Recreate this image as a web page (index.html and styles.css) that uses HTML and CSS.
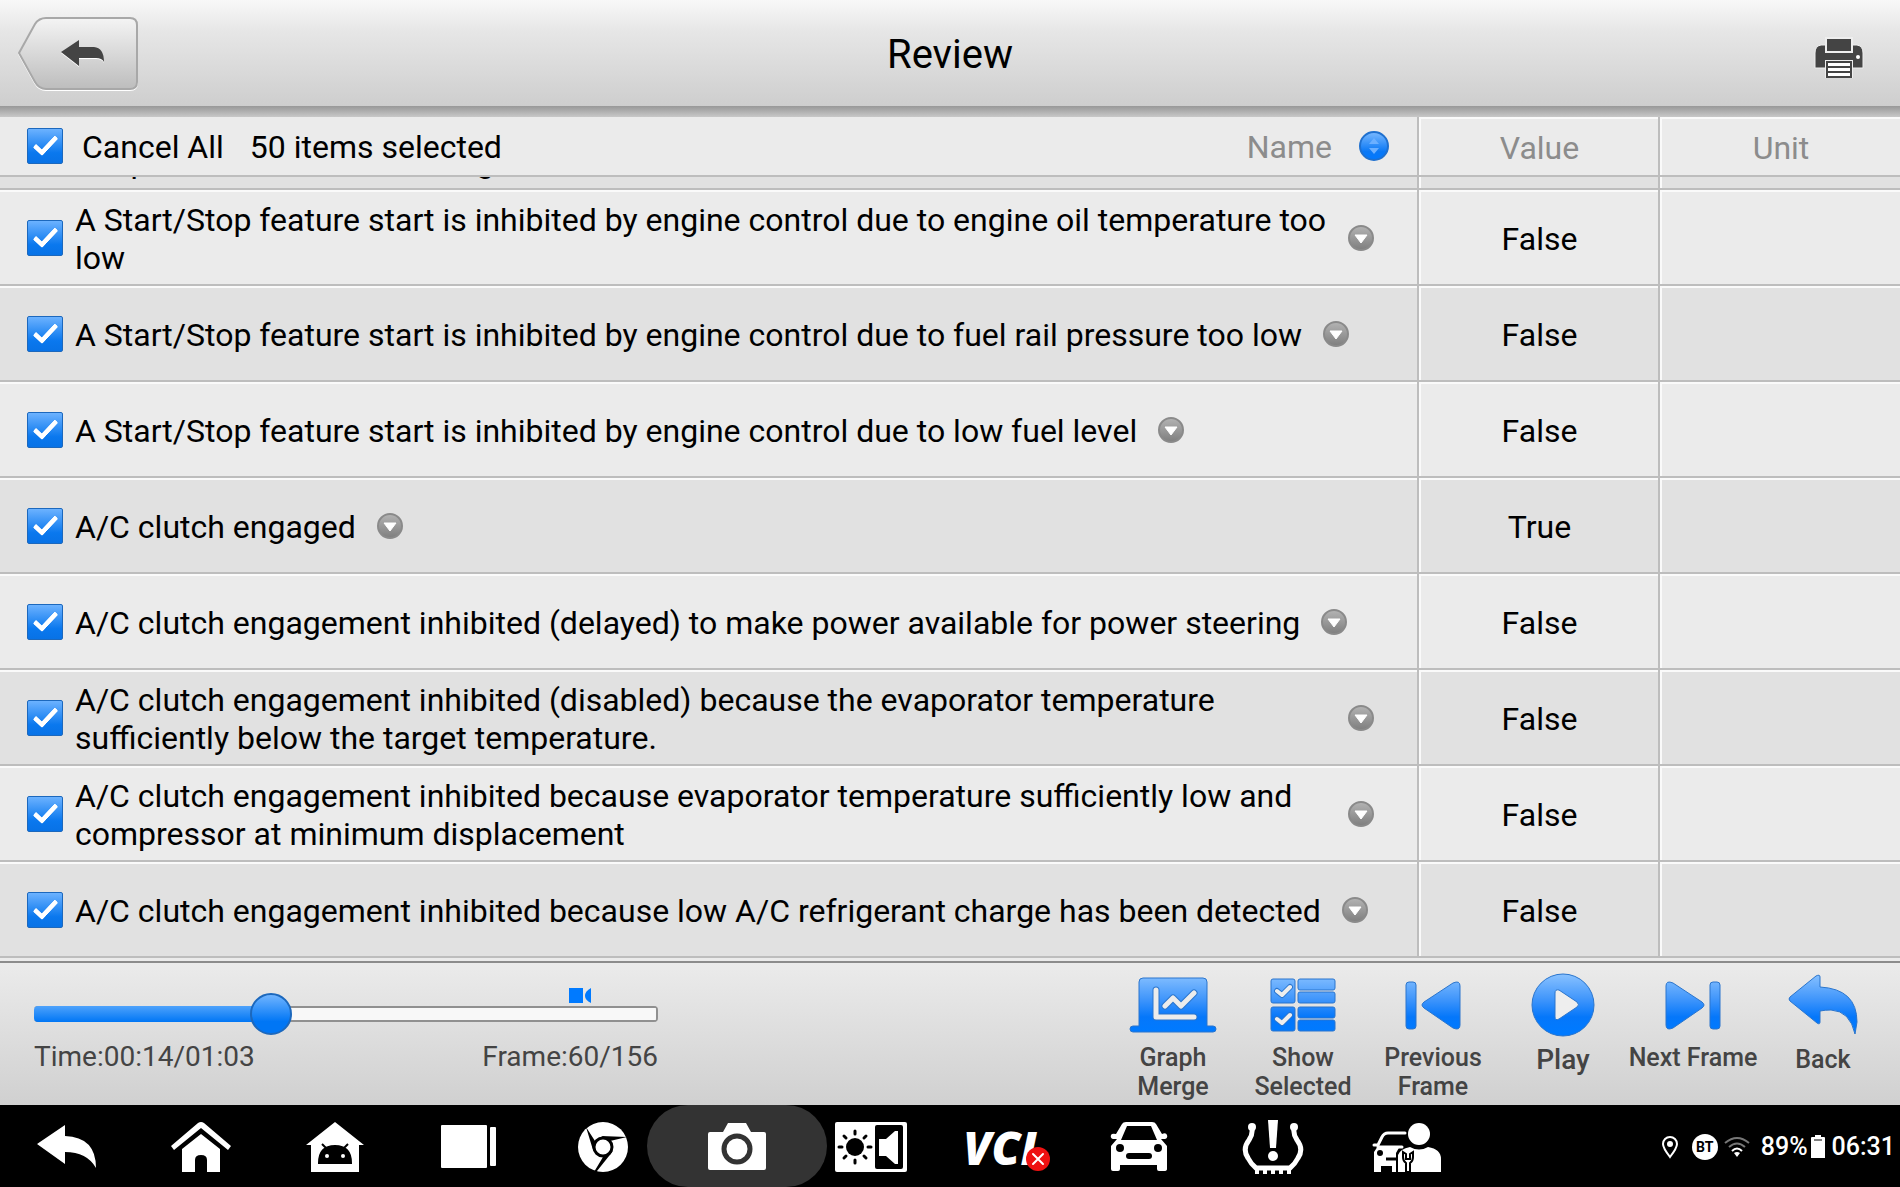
FILE: index.html
```html
<!DOCTYPE html>
<html lang="en">
<head>
    <meta charset="UTF-8">
    <meta name="viewport" content="width=device-width, initial-scale=1.0">
    <title>Review</title>
    <link rel="stylesheet" href="styles.css">
</head>
<body>
    <!-- shared gradients and symbols -->
    <svg class="defs" width="0" height="0" aria-hidden="true">
        <defs>
            <linearGradient id="blue" x1="0" y1="0" x2="0" y2="1">
                <stop offset="0" stop-color="#7ab9ff"/>
                <stop offset="0.7" stop-color="#0a78f5"/>
                <stop offset="1" stop-color="#0078ff"/>
            </linearGradient>
            <linearGradient id="blueLong" gradientUnits="userSpaceOnUse" x1="0" y1="2" x2="0" y2="58">
                <stop offset="0" stop-color="#86c0ff"/>
                <stop offset="0.45" stop-color="#3d94fb"/>
                <stop offset="0.75" stop-color="#0577fa"/>
                <stop offset="1" stop-color="#007aff"/>
            </linearGradient>
            <linearGradient id="grey" x1="0" y1="0" x2="0" y2="1">
                <stop offset="0" stop-color="#b4b4b4"/>
                <stop offset="1" stop-color="#7e7e7e"/>
            </linearGradient>
            <linearGradient id="silver" x1="0" y1="0" x2="0" y2="1">
                <stop offset="0" stop-color="#f4f4f4"/>
                <stop offset="1" stop-color="#bdbdbd"/>
            </linearGradient>
            <symbol id="more" viewBox="0 0 28 28">
                <circle cx="14" cy="14" r="12" fill="url(#grey)" stroke="#8a8a8a" stroke-width="2"/>
                <path d="M8 11h12l-6 8z" fill="#fff" stroke="#fff" stroke-linejoin="round"/>
            </symbol>
        </defs>
    </svg>

    <header>
        <button class="back-button" aria-label="Back">
            <svg width="120" height="76" viewBox="0 0 120 76">
                <path d="M1 37 17 8Q21 2 28 2H112Q119 2 119 9V66Q119 73 112 73H28Q21 73 17 66Z" fill="url(#silver)" stroke="#fff" stroke-width="2" transform="translate(0 1)"/>
                <path d="M1 37 17 8Q21 2 28 2H112Q119 2 119 9V66Q119 73 112 73H28Q21 73 17 66Z" fill="url(#silver)" stroke="#a8a8a8" stroke-width="2"/>
                <path d="M43 36 61 24V31H76Q86 32 86 46Q84 42 78 42H61V50Z" fill="#fff" transform="translate(0 1)"/>
                <path d="M43 36 61 24V31H76Q86 32 86 46Q84 42 78 42H61V50Z" fill="#444"/>
            </svg>
        </button>
        <h1>Review</h1>
        <button class="print-button" aria-label="Print">
            <svg width="50" height="42" viewBox="0 0 50 42">
                <path d="M7 8H43Q49 9 49 16V31H1V16Q1 9 7 8Z" fill="#444" stroke="#eee"/>
                <path d="M12 1H38V15H12Z" fill="#444" stroke="#eee" stroke-width="2"/>
                <circle cx="44" cy="20" r="2" fill="#fff"/>
                <path d="M11 23H39V41H11Z" fill="#eee"/>
                <path d="M13 25H37V40H13ZM13 30H37M13 35H37" fill="#fff" stroke="#444" stroke-width="2"/>
            </svg>
        </button>
    </header>

    <main>
        <table>
            <colgroup>
                <col class="name-col">
                <col class="value-col">
                <col class="unit-col">
            </colgroup>
            <thead>
                <tr>
                    <th>
                        <div class="name-head">
                            <input type="checkbox" id="cancelAll" checked>
                            <label for="cancelAll">Cancel All</label>
                            <span class="count">50 items selected</span>
                            <span class="name-label">Name</span>
                            <button class="sort-button" aria-label="Sort by name">
                                <svg width="32" height="32" viewBox="0 0 32 32">
                                    <circle cx="16" cy="16" r="14" fill="url(#blue)" stroke="#1f70cf" stroke-width="2"/>
                                    <path d="M11 14 16 8 21 14ZM11 18 16 24 21 18Z" fill="#6cb0ff"/>
                                </svg>
                            </button>
                        </div>
                    </th>
                    <th>Value</th>
                    <th>Unit</th>
                </tr>
            </thead>
        </table>
        <div class="list">
            <table>
                <colgroup>
                    <col class="name-col">
                    <col class="value-col">
                    <col class="unit-col">
                </colgroup>
                <tbody>
                    <tr>
                        <td>
                            <div class="item">
                                <input type="checkbox" id="item0" checked>
                                <label for="item0">A Start/Stop feature start is inhibited by engine control due to engine coolant temperature value out of range</label>
                                <button class="more-button" aria-label="More"><svg width="28" height="28"><use href="#more"/></svg></button>
                            </div>
                        </td>
                        <td>False</td>
                        <td></td>
                    </tr>
                    <tr>
                        <td>
                            <div class="item">
                                <input type="checkbox" id="item1" checked>
                                <label for="item1">A Start/Stop feature start is inhibited by engine control due to engine oil temperature too low</label>
                                <button class="more-button" aria-label="More"><svg width="28" height="28"><use href="#more"/></svg></button>
                            </div>
                        </td>
                        <td>False</td>
                        <td></td>
                    </tr>
                    <tr>
                        <td>
                            <div class="item">
                                <input type="checkbox" id="item2" checked>
                                <label for="item2">A Start/Stop feature start is inhibited by engine control due to fuel rail pressure too low</label>
                                <button class="more-button" aria-label="More"><svg width="28" height="28"><use href="#more"/></svg></button>
                            </div>
                        </td>
                        <td>False</td>
                        <td></td>
                    </tr>
                    <tr>
                        <td>
                            <div class="item">
                                <input type="checkbox" id="item3" checked>
                                <label for="item3">A Start/Stop feature start is inhibited by engine control due to low fuel level</label>
                                <button class="more-button" aria-label="More"><svg width="28" height="28"><use href="#more"/></svg></button>
                            </div>
                        </td>
                        <td>False</td>
                        <td></td>
                    </tr>
                    <tr>
                        <td>
                            <div class="item">
                                <input type="checkbox" id="item4" checked>
                                <label for="item4">A/C clutch engaged</label>
                                <button class="more-button" aria-label="More"><svg width="28" height="28"><use href="#more"/></svg></button>
                            </div>
                        </td>
                        <td>True</td>
                        <td></td>
                    </tr>
                    <tr>
                        <td>
                            <div class="item">
                                <input type="checkbox" id="item5" checked>
                                <label for="item5">A/C clutch engagement inhibited (delayed) to make power available for power steering</label>
                                <button class="more-button" aria-label="More"><svg width="28" height="28"><use href="#more"/></svg></button>
                            </div>
                        </td>
                        <td>False</td>
                        <td></td>
                    </tr>
                    <tr>
                        <td>
                            <div class="item">
                                <input type="checkbox" id="item6" checked>
                                <label for="item6">A/C clutch engagement inhibited (disabled) because the evaporator temperature sufficiently below the target temperature.</label>
                                <button class="more-button" aria-label="More"><svg width="28" height="28"><use href="#more"/></svg></button>
                            </div>
                        </td>
                        <td>False</td>
                        <td></td>
                    </tr>
                    <tr>
                        <td>
                            <div class="item">
                                <input type="checkbox" id="item7" checked>
                                <label for="item7">A/C clutch engagement inhibited because evaporator temperature sufficiently low and compressor at minimum displacement</label>
                                <button class="more-button" aria-label="More"><svg width="28" height="28"><use href="#more"/></svg></button>
                            </div>
                        </td>
                        <td>False</td>
                        <td></td>
                    </tr>
                    <tr>
                        <td>
                            <div class="item">
                                <input type="checkbox" id="item8" checked>
                                <label for="item8">A/C clutch engagement inhibited because low A/C refrigerant charge has been detected</label>
                                <button class="more-button" aria-label="More"><svg width="28" height="28"><use href="#more"/></svg></button>
                            </div>
                        </td>
                        <td>False</td>
                        <td></td>
                    </tr>
                </tbody>
            </table>
        </div>
    </main>

    <footer>
        <div class="timeline">
            <svg class="marker" width="22" height="16" viewBox="0 0 22 16">
                <path d="M0 0H14V15H0ZM22 0V15Q16 12 16 8Q16 3 22 0Z" fill="#007aff"/>
            </svg>
            <input type="range" min="0" max="156" value="58" aria-label="Frame">
            <div class="times">
                <span>Time:00:14/01:03</span>
                <span>Frame:60/156</span>
            </div>
        </div>
        <div class="tools">
            <button class="tool">
                <svg width="88" height="60" viewBox="0 0 88 60">
                    <g fill="url(#blueLong)" stroke="#2a75cd">
                        <path d="M10 53V9Q10 5 14 5H74Q78 5 78 9V53H84Q87 53 87 56T84 59H4Q1 59 1 56T4 53H10Z"/>
                    </g>
                    <path d="M27 17V44H65M36 33 44 25 52 33 65 20" fill="none" stroke="#2a75cd" stroke-width="7" stroke-linecap="round" stroke-linejoin="round"/>
                    <path d="M27 17V44H65M36 33 44 25 52 33 65 20" fill="none" stroke="#ececec" stroke-width="5" stroke-linecap="round" stroke-linejoin="round"/>
                </svg>
                <span>Graph<br>Merge</span>
            </button>
            <button class="tool">
                <svg width="68" height="60" viewBox="0 0 68 60">
                    <g fill="url(#blueLong)" stroke="#2a75cd">
                        <rect x="2" y="6" width="24" height="24" rx="2"/>
                        <rect x="29" y="6" width="37" height="11" rx="2"/>
                        <rect x="29" y="19" width="37" height="11" rx="2"/>
                        <rect x="2" y="34" width="24" height="24" rx="2"/>
                        <rect x="29" y="34" width="37" height="11" rx="2"/>
                        <rect x="29" y="47" width="37" height="11" rx="2"/>
                    </g>
                    <path d="M8 18 13 22 21 14M8 46 13 50 21 42" fill="none" stroke="#2a75cd" stroke-width="6" stroke-linecap="round" stroke-linejoin="round"/>
                    <path d="M8 18 13 22 21 14M8 46 13 50 21 42" fill="none" stroke="#eee" stroke-width="4" stroke-linecap="round" stroke-linejoin="round"/>
                </svg>
                <span>Show<br>Selected</span>
            </button>
            <button class="tool">
                <svg width="60" height="60" viewBox="0 0 60 60">
                    <g fill="url(#blueLong)" stroke="#2a75cd">
                        <rect x="3" y="9" width="10" height="47" rx="3"/>
                        <path d="M21 29 50 10Q57 7 57 13V52Q57 58 50 55L21 35Q17 32 21 29Z"/>
                    </g>
                </svg>
                <span>Previous<br>Frame</span>
            </button>
            <button class="tool play">
                <svg width="64" height="64" viewBox="0 0 64 64">
                    <circle cx="32" cy="32" r="31" fill="url(#blueLong)" stroke="#2a75cd"/>
                    <path d="M24 20Q24 16 28 17L46 29Q49 32 46 34L28 46Q24 48 24 44Z" fill="#eee" stroke="#2a75cd"/>
                </svg>
                <span>Play</span>
            </button>
            <button class="tool">
                <svg width="60" height="60" viewBox="0 0 60 60">
                    <g fill="url(#blueLong)" stroke="#2a75cd">
                        <rect x="47" y="9" width="10" height="47" rx="3"/>
                        <path d="M39 29 10 10Q3 7 3 13V52Q3 58 10 55L39 35Q43 32 39 29Z"/>
                    </g>
                </svg>
                <span>Next Frame</span>
            </button>
            <button class="tool">
                <svg width="70" height="62" viewBox="0 0 70 62">
                    <path d="M2 24 28 3Q32 1 32 4V14Q69 16 69 49L67 61Q62 38 43 37Q37 37 32 38V49Q32 52 29 50L2 28Q0 26 2 24Z" fill="url(#blueLong)" stroke="#2a75cd"/>
                </svg>
                <span>Back</span>
            </button>
        </div>
    </footer>

    <nav>
        <div class="nav-buttons">
            <button aria-label="Return">
                <svg width="60" height="50" viewBox="0 0 60 50">
                    <path d="M0 22 28 3V14Q59 15 59 46Q50 30 28 30V42Z" fill="#fff"/>
                </svg>
            </button>
            <button aria-label="Home">
                <svg width="60" height="50" viewBox="0 0 60 50">
                    <path d="M0 24 27 1Q30-1 33 1L60 24 57 28 30 6 3 28Z" fill="#fff"/>
                    <path d="M11 27 30 12 49 27V50H36V38Q36 33 30 33T24 38V50H11Z" fill="#fff"/>
                </svg>
            </button>
            <button aria-label="System home">
                <svg width="60" height="50" viewBox="0 0 60 50">
                    <path d="M30 0 59 23H54V50H6V23H1Z" fill="#fff"/>
                    <path d="M14 41Q14 24 30 24T46 41ZM17 22 22 27M43 22 38 27" fill="#000" stroke="#000" stroke-width="2"/>
                    <circle cx="22" cy="34" r="2" fill="#fff"/>
                    <circle cx="38" cy="34" r="2" fill="#fff"/>
                </svg>
            </button>
            <button aria-label="Recent apps">
                <svg width="60" height="50" viewBox="0 0 60 50">
                    <rect x="2" y="3" width="46" height="43" rx="1" fill="#fff"/>
                    <rect x="51" y="5" width="6" height="39" rx="1" fill="#fff"/>
                </svg>
            </button>
            <button aria-label="Browser">
                <svg width="52" height="52" viewBox="0 0 52 52">
                    <circle cx="26" cy="26" r="25" fill="#fff"/>
                    <path d="M9 6 16 29 20 33 18 20ZM24 15 50 16 33 20ZM36 30 26 36 17 51 20 50Z" fill="#000"/>
                    <circle cx="26" cy="26" r="9" fill="#fff" stroke="#000" stroke-width="3"/>
                </svg>
            </button>
            <button class="camera" aria-label="Screenshot">
                <svg width="60" height="50" viewBox="0 0 60 50">
                    <path d="M3 10H16L21 1H39L44 10H57Q59 10 59 12V46Q59 48 57 48H3Q1 48 1 46V12Q1 10 3 10Z" fill="#fff"/>
                    <circle cx="30" cy="27" r="13" fill="#fff" stroke="#333" stroke-width="5"/>
                </svg>
            </button>
            <button aria-label="Brightness and volume">
                <svg width="74" height="52" viewBox="0 0 74 52">
                    <rect x="1" y="1" width="72" height="50" rx="2" fill="#fff"/>
                    <circle cx="21" cy="26" r="9" fill="#000"/>
                    <path d="M21 10V13M21 39V42M5 26H8M34 26H37M10 15 12 17M30 35 32 37M32 15 30 17M12 35 10 37" stroke="#000" stroke-width="3" stroke-linecap="round"/>
                    <rect x="41" y="4" width="28" height="44" rx="2" fill="#000"/>
                    <path d="M45 18H52L61 10H64V43H61L52 35H45Z" fill="#fff"/>
                </svg>
            </button>
            <button class="vci" aria-label="VCI disconnected">
                <span>VCI</span>
                <svg width="24" height="24" viewBox="0 0 24 24">
                    <circle cx="12" cy="12" r="12" fill="#ee1111"/>
                    <path d="M7 7 17 17M17 7 7 17" stroke="#fff" stroke-width="2" stroke-linecap="round"/>
                </svg>
            </button>
            <button aria-label="Vehicle">
                <svg width="60" height="52" viewBox="0 0 60 52">
                    <path d="M2 14Q1 17 4 18H8L2 25V48Q2 50 4 50H9Q11 50 11 48V44H48V48Q48 50 50 50H55Q58 50 58 48V25L52 18H56Q59 17 58 14T53 13L47 3Q46 1 43 1H17Q14 1 13 3L7 13Q3 12 2 14ZM18 5H42L48 19H12Z" fill="#fff" fill-rule="evenodd"/>
                    <circle cx="11" cy="27" r="4" fill="#000"/>
                    <circle cx="49" cy="27" r="4" fill="#000"/>
                    <rect x="17" y="32" width="26" height="6" rx="3" fill="#000"/>
                </svg>
            </button>
            <button aria-label="Tire pressure">
                <svg width="62" height="56" viewBox="0 0 62 56">
                    <path d="M10 9Q11 15 7 21Q0 30 6 39Q9 45 14 49H48Q53 45 56 39Q62 30 55 21Q51 15 52 9" fill="none" stroke="#fff" stroke-width="5" stroke-linecap="round"/>
                    <circle cx="10" cy="8" r="4" fill="#fff"/>
                    <circle cx="52" cy="8" r="4" fill="#fff"/>
                    <path d="M13 53H49" stroke="#fff" stroke-width="4" stroke-dasharray="4 4"/>
                    <path d="M26 1H36L34 29H28Z" fill="#fff"/>
                    <circle cx="31" cy="37" r="5" fill="#fff"/>
                </svg>
            </button>
            <button aria-label="Service">
                <svg width="70" height="52" viewBox="0 0 70 52">
                    <path d="M33 12H16Q12 12 10 16L6 24H2M6 26H30" fill="none" stroke="#fff" stroke-width="3" stroke-linecap="round"/>
                    <path d="M6 25H28L24 32V51H20V45H9V51H2V31Z" fill="#fff"/>
                    <circle cx="8" cy="32" r="3" fill="#000"/>
                    <path d="M14 38H25" stroke="#000" stroke-width="3"/>
                    <circle cx="47" cy="13" r="11" fill="#fff"/>
                    <path d="M38 26Q47 31 56 26Q69 28 69 38V51H26V34Q28 28 38 26Z" fill="#fff"/>
                    <path d="M31 31V36Q31 40 34 42V51H38V42Q41 40 41 36V31L38 33V38H34V33Z" fill="#fff" stroke="#000" stroke-width="2"/>
                </svg>
            </button>
        </div>
        <div class="status">
            <svg width="18" height="24" viewBox="0 0 18 24">
                <path d="M9 22Q2 13 2 9A7 7 0 0 1 16 9Q16 13 9 22Z" fill="none" stroke="#fff" stroke-width="2"/>
                <circle cx="9" cy="9" r="3" fill="#fff"/>
            </svg>
            <span class="bt">BT</span>
            <svg class="wifi" width="26" height="22" viewBox="0 0 26 22">
                <path d="M1 7Q13-3 25 7M5 11Q13 4 21 11" fill="none" stroke="#777" stroke-width="2"/>
                <path d="M8 15Q13 10 18 15" fill="none" stroke="#fff" stroke-width="2"/>
                <path d="M10 17Q13 15 16 17L13 21Z" fill="#fff"/>
            </svg>
            <span>89%</span>
            <svg class="battery" width="14" height="24" viewBox="0 0 14 24">
                <path d="M4 0H10V2H13Q14 2 14 3V23H0V3Q0 2 1 2H4Z" fill="#fff"/>
                <path d="M3 5H11" stroke="#000"/>
            </svg>
            <span>06:31</span>
        </div>
    </nav>
</body>
</html>
```
FILE: styles.css
```css
*,
*::before {
    box-sizing: border-box;
}

body {
    margin: 0;
    height: 100vh;
    display: flex;
    flex-direction: column;
    background-color: #ebebeb;
    font-family: Roboto, sans-serif;
    font-size: 32px;
    line-height: 38px;
    color: #000000;
}

button {
    padding: 0;
    border: none;
    background: none;
    font-family: inherit;
    color: inherit;
}

svg {
    display: block;
}

.defs {
    position: absolute;
}

/* top bar */
header {
    display: grid;
    grid-template-columns: 1fr auto 1fr;
    align-items: center;
    flex: none;
    height: 117px;
    padding: 0 18px 10px 18px;
    background: linear-gradient(#989898, #c8c8c8) 0 106px / 100% 11px no-repeat,
        linear-gradient(#f8f8f8, #e6e6e6 30%, #cecece) 0 0 / 100% 106px no-repeat;
}

header h1 {
    margin: 0;
    padding-top: 2px;
    font-size: 40px;
    font-weight: 400;
    line-height: 48px;
}

.back-button {
    justify-self: start;
}

.print-button {
    justify-self: end;
    margin-right: 18px;
    padding-top: 8px;
}

/* table */
main {
    display: flex;
    flex-direction: column;
    flex: 1;
    min-height: 0;
    padding-bottom: 3px;
}

table {
    flex: none;
    width: 100%;
    table-layout: fixed;
    border-collapse: separate;
    border-spacing: 0;
}

.value-col {
    width: 241px;
}

.unit-col {
    width: 242px;
}

th,
td {
    padding: 0;
    border-bottom: 2px solid #bdbdbd;
    text-align: center;
    vertical-align: middle;
}

th + th,
td + td {
    padding: 4px 0 0 2px;
    border-left: 2px solid #bdbdbd;
    box-shadow: inset 2px 0 #fafafa, inset 0 2px #fafafa;
}

td:first-child {
    padding-top: 2px;
    box-shadow: inset 0 2px #fafafa;
}

th {
    height: 60px;
    font-weight: 400;
    color: #8c8c8c;
}

td {
    height: 96px;
}

tr:nth-child(odd) td {
    background-color: #e1e1e1;
}

.name-head {
    display: flex;
    align-items: center;
    padding: 0 27px;
}

.name-head label,
.count {
    color: #000000;
}

.name-head label {
    margin-left: 19px;
}

.name-head label,
.name-head span,
.item label {
    padding-top: 2px;
}

.count {
    margin-left: 26px;
}

.name-label {
    margin-left: auto;
}

.sort-button {
    margin-left: 26px;
}

/* the list is scrolled to its end */
.list {
    display: flex;
    flex-direction: column;
    justify-content: flex-end;
    flex: 1;
    min-height: 0;
    overflow: hidden;
}

.item {
    display: flex;
    align-items: center;
    padding: 0 42px 0 27px;
    text-align: left;
}

.item label {
    margin: 0 20px 0 12px;
}

input[type="checkbox"] {
    appearance: none;
    flex: none;
    width: 36px;
    height: 36px;
    margin: 0;
    border: 1px solid #1c68bd;
    border-radius: 2px;
    background: linear-gradient(#6cb2ff, #0a78ee 70%, #0872e6);
}

input[type="checkbox"]:checked::before {
    content: "";
    display: block;
    width: 13px;
    height: 24px;
    margin: 2px 0 0 11px;
    border: solid #ffffff;
    border-width: 0 5px 5px 0;
    border-radius: 2px;
    transform: rotate(43deg);
}

/* playback bar */
footer {
    display: flex;
    justify-content: space-between;
    flex: none;
    height: 144px;
    padding: 0 12px 0 34px;
    border-top: 2px solid #8c8c8c;
    background: linear-gradient(#ebebeb, #d0d0d0);
    color: #444444;
}

.timeline {
    width: 624px;
    padding-top: 25px;
    font-size: 28px;
    line-height: 34px;
}

.marker {
    margin: 0 0 -12px 535px;
}

input[type="range"] {
    appearance: none;
    display: block;
    width: 100%;
    height: 44px;
    margin: 0;
    background: none;
}

input[type="range"]::-webkit-slider-runnable-track {
    height: 16px;
    border-right: 2px solid #909090;
    border-radius: 4px;
    background: linear-gradient(#4ea2fb, #0076f5) 0 0 / 38% 100% no-repeat,
        linear-gradient(#909090 2px, #f8f8f8 2px 14px, #909090 14px);
}

input[type="range"]::-webkit-slider-thumb {
    appearance: none;
    width: 42px;
    height: 42px;
    margin-top: -13px;
    border: 2px solid #1c68bd;
    border-radius: 50%;
    background: linear-gradient(#70b4ff, #0076f5 70%);
}

.times {
    display: flex;
    justify-content: space-between;
    margin-top: 4px;
}

.tools {
    display: flex;
}

.tool {
    display: flex;
    flex-direction: column;
    align-items: center;
    width: 130px;
    padding-top: 10px;
    font-size: 25px;
    font-weight: 500;
    line-height: 29px;
}

.tool span {
    margin-top: 10px;
    white-space: nowrap;
}

.play {
    font-size: 28px;
}

.play span {
    margin-top: 8px;
}

/* system bar */
nav {
    display: flex;
    align-items: center;
    justify-content: space-between;
    flex: none;
    height: 82px;
    background-color: #000000;
    color: #ffffff;
}

.nav-buttons {
    display: flex;
    height: 100%;
}

.nav-buttons button {
    display: flex;
    align-items: center;
    justify-content: center;
    width: 134px;
    padding-top: 2px;
}

.nav-buttons .camera {
    width: 180px;
    margin: 0 -23px;
    border-radius: 41px;
    background-color: #333333;
}

.nav-buttons .vci {
    position: relative;
    padding-right: 10px;
    font-family: "Open Sans", sans-serif;
    font-size: 46px;
    font-style: italic;
    font-weight: 800;
}

.vci svg {
    position: absolute;
    right: 22px;
    bottom: 16px;
}

.status {
    display: flex;
    align-items: center;
    padding: 2px 5px 0 0;
    font-size: 25px;
    font-weight: 500;
}

.bt {
    width: 26px;
    height: 26px;
    margin: 0 6px 0 13px;
    border-radius: 50%;
    background-color: #ffffff;
    color: #000000;
    font-size: 14px;
    font-weight: 700;
    line-height: 26px;
    text-align: center;
}

.wifi {
    margin-right: 11px;
}

.battery {
    margin: 0 7px 0 3px;
}
```
